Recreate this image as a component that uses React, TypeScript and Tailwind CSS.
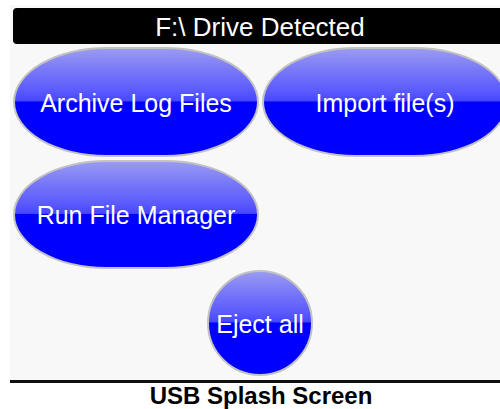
const gloss =
  'bg-[linear-gradient(to_bottom,#9a9af2_0%,#7878f8_20%,#5a5aff_40%,#4646ff_49%,#0000ff_50%,#0000ff_100%)]'

function PillButton({ label, className }: { label: string; className: string }) {
  return (
    <button
      className={`${gloss} border-2 border-[#c2c2c2] flex items-center justify-center pt-[2px] text-white text-[25px] leading-none ${className}`}
    >
      {label}
    </button>
  )
}

export default function App() {
  return (
    <div
      className="w-[500px] h-[409px] bg-white overflow-hidden"
      style={{ fontFamily: '"Liberation Sans", Arial, sans-serif' }}
    >
      <div className="ml-[10px] mt-[5px] w-[502px] h-[375px] bg-[#f8f8f8] pl-[3px] pt-[3px] flex flex-col">
        <div className="w-[494px] h-[36px] bg-black rounded-[4px] flex items-center justify-center pt-[1px] text-white text-[26px] leading-none">
          F:\ Drive Detected
        </div>
        <div className="grid grid-cols-[246px_246px] gap-x-[3px] gap-y-[3px] mt-[3px]">
          <PillButton label="Archive Log Files" className="h-[110px] rounded-[38%/50%]" />
          <PillButton label="Import file(s)" className="h-[110px] rounded-[38%/50%]" />
          <PillButton label="Run File Manager" className="h-[109px] rounded-[38%/50%]" />
        </div>
        <div className="w-[494px] flex justify-center mt-[1px]">
          <PillButton label="Eject all" className="w-[106px] h-[106px] rounded-full" />
        </div>
      </div>
      <div className="ml-[10px] w-[502px] h-[3px] bg-[#111]" />
      <div className="ml-[10px] w-[502px] pt-[1px] text-center font-bold text-[24px] leading-[24px] text-black">
        USB Splash Screen
      </div>
    </div>
  )
}
